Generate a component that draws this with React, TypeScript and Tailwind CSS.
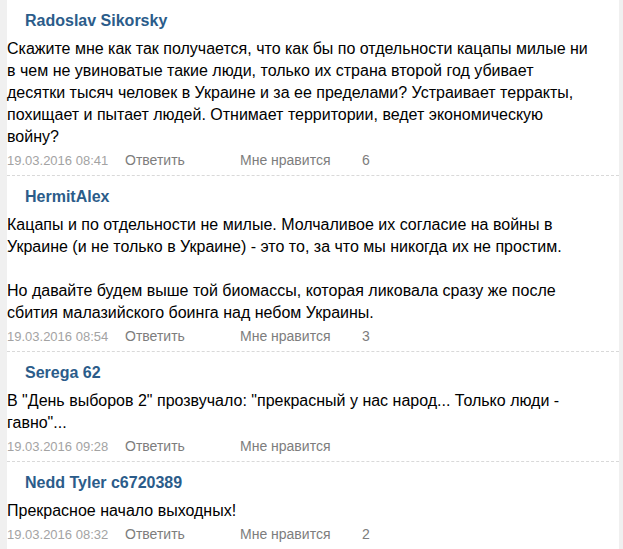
const comments = [
  {
    name: "Radoslav Sikorsky",
    lines: [
      "Скажите мне как так получается, что как бы по отдельности кацапы милые ни",
      "в чем не увиноватые такие люди, только их страна второй год убивает",
      "десятки тысяч человек в Украине и за ее пределами? Устраивает терракты,",
      "похищает и пытает людей. Отнимает территории, ведет экономическую",
      "войну?",
    ],
    date: "19.03.2016 08:41",
    likes: "6",
  },
  {
    name: "HermitAlex",
    lines: [
      "Кацапы и по отдельности не милые. Молчаливое их согласие на войны в",
      "Украине (и не только в Украине) - это то, за что мы никогда их не простим.",
      "",
      "Но давайте будем выше той биомассы, которая ликовала сразу же после",
      "сбития малазийского боинга над небом Украины.",
    ],
    date: "19.03.2016 08:54",
    likes: "3",
  },
  {
    name: "Serega 62",
    lines: [
      'В "День выборов 2" прозвучало: "прекрасный у нас народ... Только люди -',
      'гавно"...',
    ],
    date: "19.03.2016 09:28",
    likes: "",
  },
  {
    name: "Nedd Tyler c6720389",
    lines: ["Прекрасное начало выходных!"],
    date: "19.03.2016 08:32",
    likes: "2",
  },
];

export default function App() {
  return (
    <div className="flex min-h-screen bg-white font-['Liberation_Sans',Arial,sans-serif]">
      <div className="w-[7px] shrink-0 bg-[#f0f0f0]" />
      <div className="w-[612px] shrink-0">
        {comments.map((c, i) => (
          <div key={i} className="border-b border-dashed border-[#d9d9d9] pt-[10px] pb-[4px]">
            <div className="pl-[18px] text-[16px] font-bold leading-[22px] text-[#2b5c8a]">{c.name}</div>
            <div className="mt-[6px] text-[16px] leading-[22px] text-black">
              {c.lines.map((l, j) => (
                <div key={j} className="h-[22px] whitespace-nowrap">
                  {l}
                </div>
              ))}
            </div>
            <div className="mt-[2px] flex items-baseline leading-[20px]">
              <span className="w-[118px] text-[13px] text-[#a3a3a3]">{c.date}</span>
              <span className="w-[115px] text-[14px] text-[#7d7d7d]">Ответить</span>
              <span className="w-[122px] text-[14px] text-[#7d7d7d]">Мне нравится</span>
              <span className="text-[14px] text-[#7d7d7d]">{c.likes}</span>
            </div>
          </div>
        ))}
      </div>
      <div className="flex-1 bg-[#f0f0f0]" />
    </div>
  );
}
